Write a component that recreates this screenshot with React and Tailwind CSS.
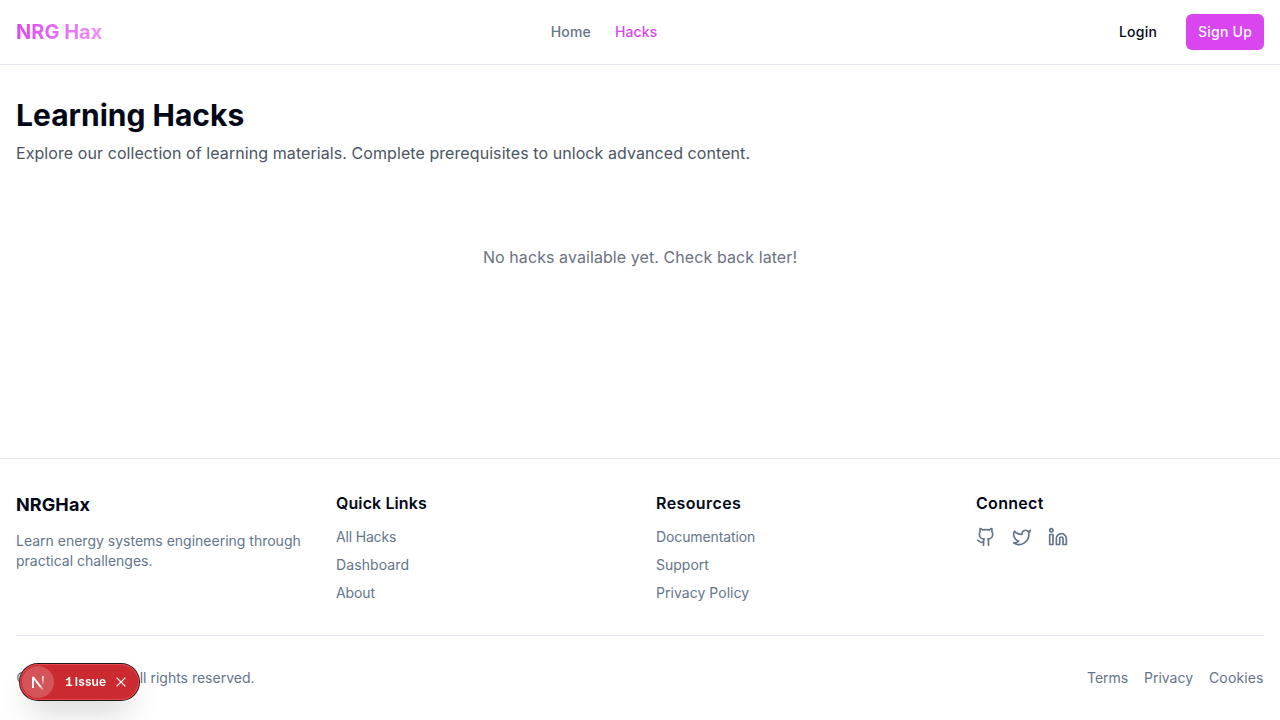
import { Github, Linkedin, Twitter } from "lucide-react";

const columns = [
  {
    title: "Quick Links",
    tracking: "tracking-[0.1px]",
    links: [
      { label: "All Hacks", tracking: "tracking-[-0.18px]" },
      { label: "Dashboard", tracking: "tracking-[0.1px]" },
      { label: "About", tracking: "tracking-[-0.1px]" },
    ],
  },
  {
    title: "Resources",
    tracking: "tracking-[0.4px]",
    links: [
      { label: "Documentation", tracking: "tracking-[-0.11px]" },
      { label: "Support", tracking: "tracking-normal" },
      { label: "Privacy Policy", tracking: "tracking-[0.04px]" },
    ],
  },
];

function Header() {
  return (
    <header className="border-b border-[#e2e8f0]">
      <div className="flex h-16 items-center justify-between px-4">
        <a className="bg-gradient-to-r from-[#d946ef] to-[#ee90f8] bg-clip-text text-xl font-bold text-transparent">
          NRG Hax
        </a>
        <nav className="flex items-center gap-6 text-sm font-medium tracking-[0.15px]">
          <a className="text-[#64748b]">Home</a>
          <a className="text-[#d946ef]">Hacks</a>
        </nav>
        <div className="flex items-center gap-4 text-sm font-medium tracking-[0.24px]">
          <button className="h-9 w-16 rounded-md">Login</button>
          <button className="h-9 w-[78px] rounded-md bg-[#d946ef] text-[#f8fafc]">Sign Up</button>
        </div>
      </div>
    </header>
  );
}

function Footer() {
  return (
    <footer className="border-t border-[#e2e8f0] px-4 py-8">
      <div className="grid grid-cols-4 gap-8">
        <div>
          <h3 className="mb-3 text-lg font-bold tracking-[0.1px]">NRGHax</h3>
          <p className="text-sm text-[#64748b]">
            Learn energy systems engineering through practical challenges.
          </p>
        </div>
        {columns.map((c) => (
          <div key={c.title}>
            <h4 className={`mb-3 font-semibold ${c.tracking}`}>{c.title}</h4>
            <ul className="space-y-2 text-sm text-[#64748b]">
              {c.links.map((l) => (
                <li key={l.label} className={l.tracking}>
                  {l.label}
                </li>
              ))}
            </ul>
          </div>
        ))}
        <div>
          <h4 className="mb-3 font-semibold tracking-[0.3px]">Connect</h4>
          <div className="flex gap-4 text-[#64748b]">
            <Github className="h-5 w-5" />
            <Twitter className="h-5 w-5" />
            <Linkedin className="h-5 w-5" />
          </div>
        </div>
      </div>
      <div className="mt-8 flex items-center justify-between border-t border-[#e2e8f0] pt-8 text-sm text-[#64748b]">
        <p>
          <span className="tracking-[-0.33px]">© 2025 NRGHax. </span>
          All rights reserved.
        </p>
        <div className="flex gap-4">
          <a className="w-[41px]">Terms</a>
          <a className="w-[49px]">Privacy</a>
          <a className="w-[55px] tracking-[0.14px]">Cookies</a>
        </div>
      </div>
    </footer>
  );
}

function IssueBadge() {
  return (
    <div className="fixed bottom-5 left-5 flex h-9 w-[119px] items-center rounded-full bg-[#ca2a30] pl-0.5 text-white shadow-[0_0_0_1px_#171717,inset_0_0_0_1px_#e5484d,0_16px_32px_-8px_rgba(0,0,0,0.24)]">
      <span className="flex h-8 w-8 shrink-0 items-center justify-center rounded-full bg-white/20">
        <svg width="40" height="40" viewBox="0 0 40 40" fill="none" className="shrink-0">
          <defs>
            <linearGradient id="markDiagonal" x1="21" y1="22" x2="27" y2="29" gradientUnits="userSpaceOnUse">
              <stop stopColor="white" />
              <stop offset="1" stopColor="white" stopOpacity="0" />
            </linearGradient>
            <linearGradient id="markStem" x1="25" y1="14" x2="25" y2="23.5" gradientUnits="userSpaceOnUse">
              <stop stopColor="white" />
              <stop offset="1" stopColor="white" stopOpacity="0" />
            </linearGradient>
          </defs>
          <path d="M15 26V15L22.5 24.7" stroke="white" strokeWidth="1.9" strokeLinejoin="bevel" />
          <path d="M22 24L24.8 27.6" stroke="url(#markDiagonal)" strokeWidth="1.9" />
          <path d="M24.9 14.2V23.5" stroke="url(#markStem)" strokeWidth="1.8" />
        </svg>
      </span>
      <span className="ml-[11px] flex w-[42px] items-baseline gap-[2px] whitespace-nowrap text-[12px] leading-4 font-semibold">
        <span className="font-['Liberation_Mono',monospace] text-[13px] font-bold">1</span>
        <span className="tracking-[0.1px]">Issue</span>
      </span>
      <svg className="ml-[7px]" width="14" height="14" viewBox="0 0 14 14" fill="none">
        <path d="M2.6 2.6L11.4 11.4M11.4 2.6L2.6 11.4" stroke="white" strokeWidth="1.2" />
      </svg>
    </div>
  );
}

export default function App() {
  return (
    <div className="flex min-h-screen flex-col bg-white font-['Inter',sans-serif] text-[#020817]">
      <Header />
      <main className="flex-1 px-4 py-8">
        <h1 className="mb-2 text-3xl font-bold">Learning Hacks</h1>
        <p className="mb-8 tracking-[0.075px] text-[#4b5563]">
          Explore our collection of learning materials. Complete prerequisites to unlock advanced content.
        </p>
        <p className="py-12 text-center tracking-[0.08px] text-[#6b7280]">
          No hacks available yet. Check back later!
        </p>
      </main>
      <Footer />
      <IssueBadge />
    </div>
  );
}
